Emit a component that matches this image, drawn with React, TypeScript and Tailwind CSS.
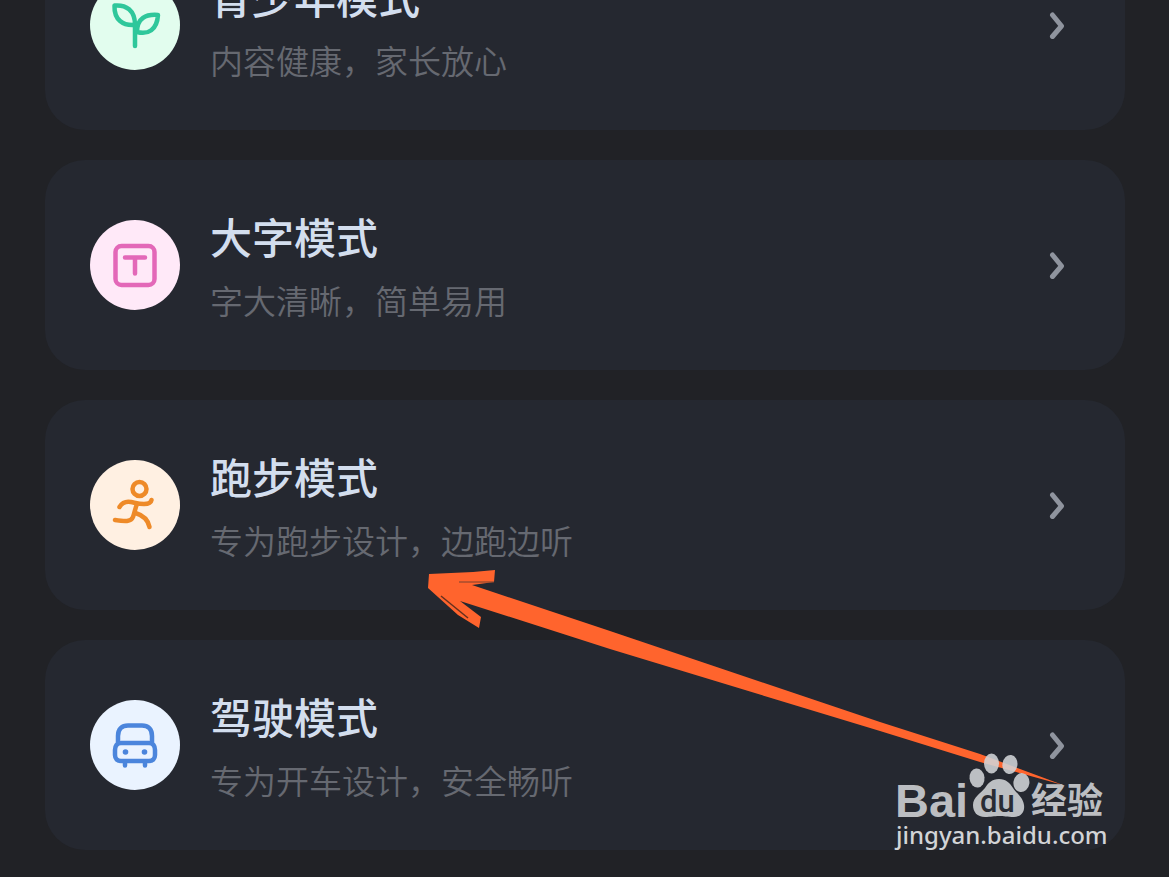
import type { ReactNode } from 'react';

interface Mode {
  id: string;
  title: string;
  description: string;
  iconClass: string;
  icon: ReactNode;
}

function SproutIcon() {
  return (
    <svg viewBox="0 0 90 90" className="w-full h-full" fill="none" stroke="currentColor" strokeWidth={4.5} strokeLinecap="round" strokeLinejoin="round">
      <path d="M24.5 25.5C36 24.500 45 30 45 45C33 46 24 40 24.500 25.500Z" />
      <path d="M68 35C56 34 47 38 47 52C58 55 67 50 68 35Z" />
      <path d="M45 43V66" />
    </svg>
  );
}

function LargeTextIcon() {
  return (
    <svg viewBox="0 0 90 90" className="w-full h-full" fill="none" stroke="currentColor" strokeWidth={4.5} strokeLinecap="round" strokeLinejoin="round">
      <rect x="25.500" y="26" width="39" height="39" rx="6" />
      <path d="M35 37.500H55M45 37.500V53.500" />
    </svg>
  );
}

function RunnerIcon() {
  return (
    <svg viewBox="0 0 90 90" className="w-full h-full" fill="none" stroke="currentColor" strokeWidth={4.5} strokeLinecap="round" strokeLinejoin="round">
      <circle cx="49.500" cy="29" r="7" />
      <path d="M29.500 47C32 43 36 41 41 42C46 43 49 44 54 44C58 44 61 42.500 61.500 40" />
      <path d="M47 44C45 49 44.500 53 43 57C41 62 35 61.500 25 60" />
      <path d="M45.500 53C52 55 58 59 59.500 67" />
    </svg>
  );
}

function CarIcon() {
  return (
    <svg viewBox="0 0 90 90" className="w-full h-full" fill="none" stroke="currentColor" strokeWidth={4.5} strokeLinecap="round" strokeLinejoin="round">
      <path d="M28 43V36C28 29 32 25.500 38 25.500H52C58 25.500 62 29 62 36V43" />
      <path d="M31 43H59C63 43 65 46 65 50V55C65 59 62.500 61 59 61H31C27.500 61 25 59 25 55V50C25 46 27 43 31 43Z" />
      <path d="M35 62V65.500M55 62V65.500" />
      <circle cx="35.500" cy="52" r="2.800" fill="currentColor" stroke="none" />
      <circle cx="54.500" cy="52" r="2.800" fill="currentColor" stroke="none" />
    </svg>
  );
}

function ChevronIcon() {
  return (
    <svg viewBox="0 0 16 28" className="w-4 h-7 shrink-0 text-[#8f949e]" fill="none" stroke="currentColor" strokeWidth={5} strokeLinecap="round" strokeLinejoin="round">
      <path d="M3.500 4L12.500 15L3.500 25.500" />
    </svg>
  );
}

const modes: Mode[] = [
  {
    id: 'teen',
    title: '青少年模式',
    description: '内容健康，家长放心',
    iconClass: 'bg-[#e2fdee] text-[#2fc79b]',
    icon: <SproutIcon />,
  },
  {
    id: 'large-text',
    title: '大字模式',
    description: '字大清晰，简单易用',
    iconClass: 'bg-[#ffe9f8] text-[#e368b8]',
    icon: <LargeTextIcon />,
  },
  {
    id: 'running',
    title: '跑步模式',
    description: '专为跑步设计，边跑边听',
    iconClass: 'bg-[#fff0e2] text-[#ee8a28]',
    icon: <RunnerIcon />,
  },
  {
    id: 'driving',
    title: '驾驶模式',
    description: '专为开车设计，安全畅听',
    iconClass: 'bg-[#eaf3ff] text-[#4b85dc]',
    icon: <CarIcon />,
  },
];

function ModeCard({ mode }: { mode: Mode }) {
  return (
    <button type="button" className="flex w-full items-center rounded-[40px] bg-[#252830] py-8 pl-[45px] pr-[60px] text-left">
      <span className={`w-[90px] h-[90px] shrink-0 rounded-full ${mode.iconClass}`}>{mode.icon}</span>
      <span className="ml-[30px] flex-1 min-w-0 pt-4 pb-1">
        <span className="block text-[42px] leading-[64px] font-medium text-[#d3deee]">{mode.title}</span>
        <span className="block text-[33px] leading-[62px] font-[350] text-[#666971]">{mode.description}</span>
      </span>
      <ChevronIcon />
    </button>
  );
}

function PointerArrow() {
  return (
    <svg viewBox="0 0 640 220" className="pointer-events-none absolute left-[428px] top-[650px] w-[640px] h-[220px]" fill="#ff642d">
      <path d="M1 4L45 2L67 0L66 12L44 15L50 17L182 61L452 152L552 184L635 215L552 192L452 161L182 79L32 31L53 47L51 58L30 45L0 18Z" />
      <path d="M31 12H66" stroke="#78402f" strokeWidth={1} />
      <path d="M13 26L40 48" stroke="#64301f" strokeWidth={1.5} />
    </svg>
  );
}

function Watermark() {
  return (
    <div className="pointer-events-none absolute left-[896px] top-[832px] w-[212px] text-[#d2d4d7]">
      <svg viewBox="0 0 212 68" className="block w-full h-[68px] overflow-visible" fill="currentColor" fillOpacity={0.88}>
        <text x="-1" y="65" fontSize="47" fontWeight="700" fontFamily="'Liberation Sans', Arial, sans-serif">Bai</text>
        <ellipse cx="81" cy="26" rx="7.500" ry="9.500" transform="rotate(-6 81 26)" />
        <ellipse cx="95.500" cy="11.500" rx="7.500" ry="10" />
        <ellipse cx="114" cy="12.500" rx="7.500" ry="9.500" transform="rotate(8 114 12)" />
        <ellipse cx="125.500" cy="30.500" rx="8" ry="9.500" transform="rotate(8 125 30)" />
        <path d="M103 27C96 27 92 31 89 36C85 41 77 45 77 53C77 60 81 65 89 65C95 65 98 64 103 64C108 64 111 65 118 65C125 65 129 60 128 53C127 45 120 41 117 36C114 31 110 27 103 27Z" />
        <text x="84" y="60" fontSize="31" fontWeight="500" fill="#292c34" fillOpacity={1} fontFamily="Roboto, sans-serif">du</text>
        <text x="135" y="62" fontSize="36" fontWeight="700" fontFamily="'Noto Sans CJK SC', sans-serif">经验</text>
      </svg>
      <p className="text-[24px] leading-[30px] font-medium whitespace-nowrap font-['Noto_Sans',sans-serif]">jingyan.baidu.com</p>
    </div>
  );
}

export default function App() {
  return (
    <div className="min-h-screen overflow-hidden bg-[#212226] font-['Liberation_Sans','Noto_Sans_CJK_SC',sans-serif]">
      {/* The list is scrolled so that its first card is partly off the top */}
      <main className="relative -mt-20 pl-[45px] pr-11 pb-7">
        <div className="flex flex-col gap-[30px]">
          {modes.map((mode) => (
            <ModeCard key={mode.id} mode={mode} />
          ))}
        </div>
        <PointerArrow />
        <Watermark />
      </main>
    </div>
  );
}
